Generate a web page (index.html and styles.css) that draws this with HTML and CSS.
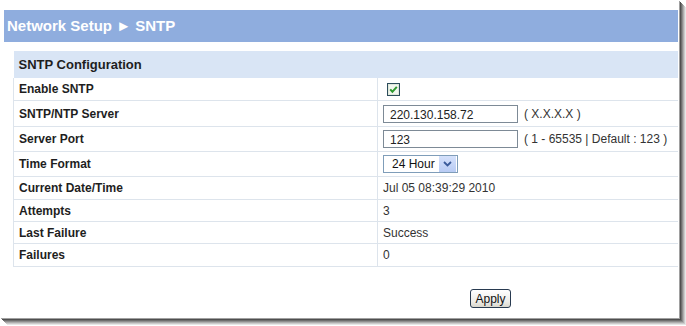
FILE: index.html
```html
<!DOCTYPE html>
<html lang="en">
<head>
  <meta charset="utf-8">
  <title>Network Setup - SNTP</title>
  <link rel="stylesheet" href="styles.css">
</head>
<body>
  <div class="shot">
    <div class="page-title">Network Setup &#9658; SNTP</div>

    <table class="cfg">
      <tr class="cfg-head"><th colspan="2">SNTP Configuration</th></tr>
      <tr class="r23">
        <td class="lbl">Enable SNTP</td>
        <td class="val">
          <svg class="chk" width="13" height="13" viewBox="0 0 13 13">
            <rect x="0.5" y="0.5" width="12" height="12" fill="#f2f6ef" stroke="#2d4d5c"/>
            <rect x="1.5" y="1.5" width="10" height="10" fill="none" stroke="#dfe8da"/>
            <path d="M3.2 6.4 L5.4 8.8 L9.8 3.8" fill="none" stroke="#2f9a2f" stroke-width="2"/>
          </svg>
        </td>
      </tr>
      <tr class="r26">
        <td class="lbl">SNTP/NTP Server</td>
        <td class="val"><input class="txt" type="text" value="220.130.158.72"><span class="hint">( X.X.X.X )</span></td>
      </tr>
      <tr class="r25">
        <td class="lbl">Server Port</td>
        <td class="val"><input class="txt" type="text" value="123"><span class="hint">( 1 - 65535 | Default : 123 )</span></td>
      </tr>
      <tr class="r25">
        <td class="lbl">Time Format</td>
        <td class="val">
          <div class="dropdown">
            <span class="dropdown-text">24 Hour</span>
            <span class="dropdown-btn">
              <svg width="9" height="6" viewBox="0 0 9 6"><path d="M1 1 L4.5 4.5 L8 1" fill="none" stroke="#3a5a9a" stroke-width="1.8"/></svg>
            </span>
          </div>
        </td>
      </tr>
      <tr class="r23">
        <td class="lbl">Current Date/Time</td>
        <td class="val">Jul 05 08:39:29 2010</td>
      </tr>
      <tr class="r22">
        <td class="lbl">Attempts</td>
        <td class="val">3</td>
      </tr>
      <tr class="r22">
        <td class="lbl">Last Failure</td>
        <td class="val">Success</td>
      </tr>
      <tr class="r23">
        <td class="lbl">Failures</td>
        <td class="val">0</td>
      </tr>
    </table>

    <div class="actions">
      <button class="apply" type="button">Apply</button>
    </div>
  </div>
</body>
</html>
```

FILE: styles.css
```css
html, body {
  height: 326px;
  overflow: hidden;
}

body {
  margin: 0;
  background: #fff;
  font-family: "Liberation Sans", Arial, sans-serif;
  font-size: 12px;
  color: #222;
}

.shot {
  width: 679px;
  height: 318px;
  background: #fff;
  overflow: hidden;
  box-shadow: 1px 1px 0 #a0a0a0, 2px 2px 0 #4f4f4f, 3px 3px 0 #6e6e6e, 4px 4px 0 #8e8e8e, 5px 5px 0 #aeaeae, 6px 6px 0 #cbcbcb, 7px 7px 0 #e6e6e6;
}

.page-title {
  margin: 10px 1px 0 4px;
  height: 32px;
  line-height: 32px;
  padding-left: 3px;
  background: #8fadde;
  color: #fff;
  font-size: 15px;
  font-weight: bold;
}

.cfg {
  margin: 9px 1px 0 13px;
  width: 665px;
  border-collapse: collapse;
}

.cfg-head th {
  height: 27px;
  padding: 0 5px;
  background: #d9e5f5;
  text-align: left;
  font-size: 13px;
  font-weight: bold;
  color: #1e1e1e;
}

.cfg td {
  padding: 0 5px;
  border-bottom: 1px solid #dde4ec;
  border-left: 1px solid #dde4ec;
  vertical-align: middle;
}

.cfg td.lbl {
  width: 353px;
  font-weight: bold;
  color: #1e1e1e;
}

.cfg td.val {
  color: #333;
}

.r22 td { height: 21px; }
.r23 td { height: 22px; }
.r25 td { height: 24px; }
.r26 td { height: 25px; }

.chk {
  display: block;
  margin-left: 4px;
}

.txt {
  box-sizing: border-box;
  width: 135px;
  height: 18px;
  margin: 0;
  padding: 2px 0 0 6px;
  border: 1px solid #7d8a96;
  font-family: "Liberation Sans", Arial, sans-serif;
  font-size: 12px;
  color: #222;
  vertical-align: middle;
}

.hint {
  margin-left: 6px;
  vertical-align: middle;
}

.dropdown {
  box-sizing: border-box;
  display: flex;
  align-items: center;
  justify-content: space-between;
  width: 75px;
  height: 18px;
  border: 1px solid #7f9db9;
  background: #fff;
}

.dropdown-text {
  padding-left: 8px;
  color: #111;
}

.dropdown-btn {
  display: flex;
  align-items: center;
  justify-content: center;
  width: 17px;
  height: 16px;
  margin-right: 1px;
  background: linear-gradient(#d5e1fb, #b8cbf4);
}

.actions {
  padding: 22px 0 0 470px;
}

.apply {
  box-sizing: border-box;
  width: 41px;
  height: 19px;
  padding: 0;
  border: 1px solid #283a50;
  border-radius: 3px;
  background: linear-gradient(#ffffff, #ecebe6 70%, #d8d6cc);
  font-family: "Liberation Sans", Arial, sans-serif;
  font-size: 12px;
  color: #111;
}
```
